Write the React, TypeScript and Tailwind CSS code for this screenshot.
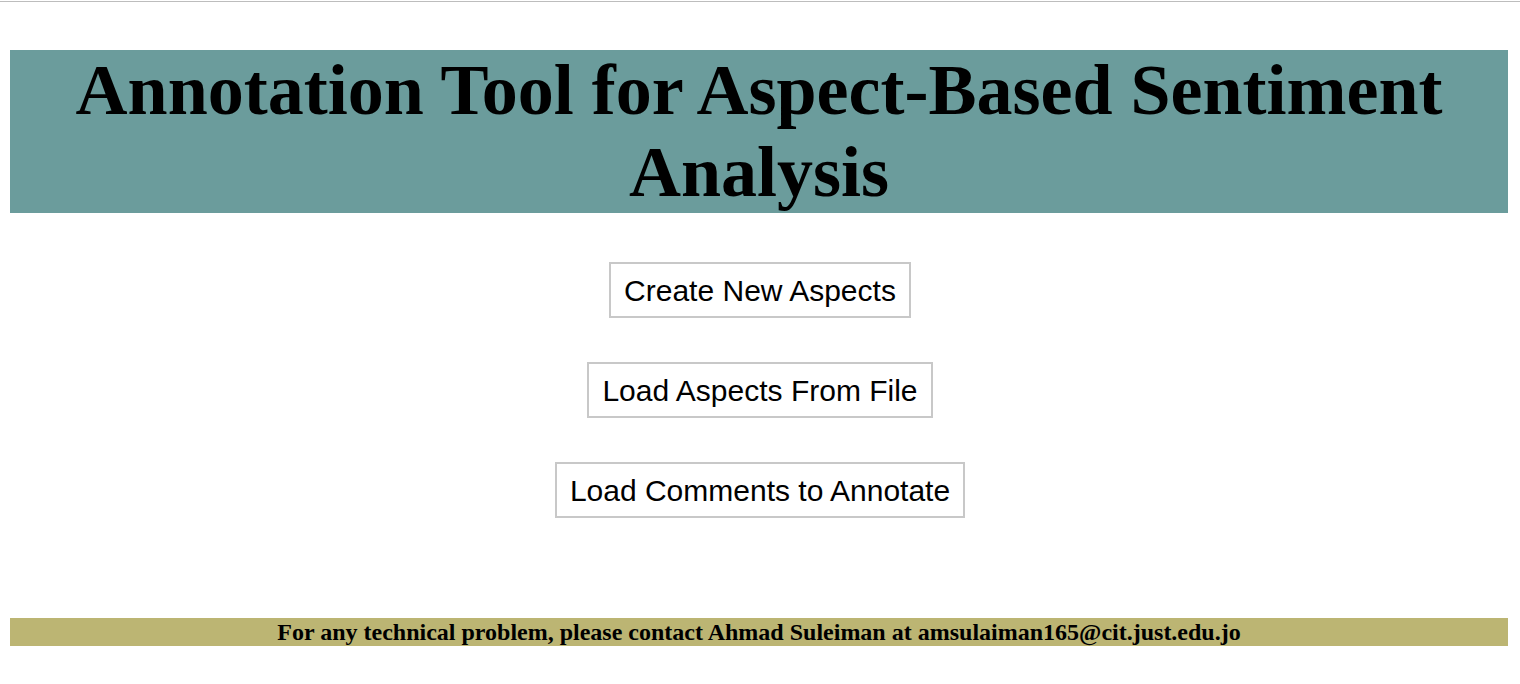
export default function App() {
  const buttons = ['Create New Aspects', 'Load Aspects From File', 'Load Comments to Annotate'];

  return (
    <div className="min-h-[684px] bg-white">
      <div className="pt-px">
        <div className="h-px bg-[#bdbdbd]" />
      </div>

      <div className="pl-[10px] pr-[12px] pt-[48px]">
        <h1
          className="bg-[#6b9c9c] text-center text-[72px] font-bold leading-[81.5px] text-black"
          style={{ fontFamily: '"Liberation Serif", "Times New Roman", serif' }}
        >
          Annotation Tool for Aspect-Based Sentiment Analysis
        </h1>
      </div>

      <div className="mt-[49px] flex flex-col items-center gap-[44px]">
        {buttons.map((label) => (
          <button
            key={label}
            className="border-2 border-[#c8c8c8] bg-white px-[13px] pt-[10px] pb-[8px] text-[30px] leading-[34px] text-black"
            style={{ fontFamily: '"Liberation Sans", Arial, sans-serif' }}
          >
            {label}
          </button>
        ))}
      </div>

      <div className="pl-[10px] pr-[12px] pt-[100px]">
        <p
          className="bg-[#bcb573] text-center text-[24px] font-bold leading-[28px] text-black"
          style={{ fontFamily: '"Liberation Serif", "Times New Roman", serif' }}
        >
          For any technical problem, please contact Ahmad Suleiman at amsulaiman165@cit.just.edu.jo
        </p>
      </div>
    </div>
  );
}
